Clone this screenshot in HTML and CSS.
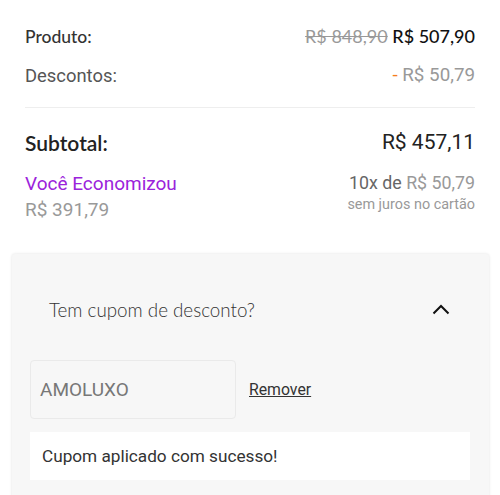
FILE: index.html
```html
<!DOCTYPE html>
<html lang="pt-BR">
<head>
  <meta charset="UTF-8">
  <meta name="viewport" content="width=device-width, initial-scale=1.0">
  <title>Resumo do pedido</title>
  <link rel="stylesheet" href="styles.css">
</head>
<body>
  <div id="resumo">
    <div class="linha">
      <span class="rotulo forte">Produto:</span>
      <span class="valor"><s class="antigo">R$ 848,90</s> <span class="atual">R$ 507,90</span></span>
    </div>
    <div class="linha">
      <span class="rotulo">Descontos:</span>
      <span class="desconto"><span class="traco">-</span> R$ 50,79</span>
    </div>
    <hr class="divisor">
    <div class="linha total">
      <span class="rotulo-total">Subtotal:</span>
      <span class="valor-total">R$ 457,11</span>
    </div>
    <div class="economia">
      <div>
        <p class="economizou">Você Economizou</p>
        <p class="economia-valor">R$ 391,79</p>
      </div>
      <div class="parcelas">
        <p class="parcela">10x de <span class="cinza">R$ 50,79</span></p>
        <p class="juros">sem juros no cartão</p>
      </div>
    </div>
  </div>

  <div id="cupom">
    <div class="cupom-topo">
      <span class="cupom-titulo">Tem cupom de desconto?</span>
      <svg class="seta" width="18" height="11" viewBox="0 0 18 11">
        <path d="M1.5 9.5 L9 2 L16.5 9.5" fill="none" stroke="#111" stroke-width="2"/>
      </svg>
    </div>
    <div class="cupom-form">
      <div class="campo">AMOLUXO</div>
      <a href="#" class="remover">Remover</a>
    </div>
    <div class="mensagem">Cupom aplicado com sucesso!</div>
  </div>
</body>
</html>
```

FILE: styles.css
```css
html, body, p {
  margin: 0;
  padding: 0;
}

body {
  background-color: #fff;
  color: #444;
  font-family: Roboto, "Liberation Sans", sans-serif;
  font-size: 16px;
}

#resumo {
  padding: 24px 25px 0;
}

.linha {
  display: flex;
  justify-content: space-between;
  align-items: center;
  height: 24px;
  margin-bottom: 15px;
}

.rotulo {
  font-size: 18.4px;
  color: #555;
}

.forte {
  font-family: Lato, "Open Sans", sans-serif;
  font-weight: 500;
  font-size: 17.5px;
  color: #333;
}

.valor {
  font-family: Lato, "Open Sans", sans-serif;
  font-size: 18px;
}

.antigo {
  color: #999;
}

.atual {
  color: #111;
  font-weight: 500;
}

.desconto {
  font-size: 18.8px;
  color: #999;
}

.traco {
  color: #f57c1f;
}

.divisor {
  border: 0;
  border-top: 1px solid #eee;
  margin: 20px 0 19px;
}

.total {
  height: 30px;
  margin-bottom: 14px;
}

.rotulo-total {
  font-family: Lato, "Open Sans", sans-serif;
  font-weight: 600;
  font-size: 21px;
  color: #222;
}

.valor-total {
  font-size: 21px;
  color: #222;
}

.economia {
  display: flex;
  justify-content: space-between;
}

.economizou {
  font-size: 19px;
  color: #9b23db;
  line-height: 26px;
}

.economia-valor {
  font-size: 19px;
  color: #999;
  line-height: 26px;
}

.parcelas {
  text-align: right;
}

.parcela {
  font-size: 17.8px;
  color: #666;
  line-height: 24px;
}

.cinza {
  color: #999;
}

.juros {
  font-size: 14.4px;
  color: #999;
  line-height: 20px;
}

#cupom {
  margin: 31px 11px 0 12px;
  padding: 0 19px 20px 18px;
  background-color: #f7f7f7;
  border-radius: 3px;
  box-shadow: 0 0 3px rgba(0, 0, 0, 0.12);
}

.cupom-topo {
  display: flex;
  justify-content: space-between;
  align-items: center;
  height: 101px;
  padding: 5px 20px 0 19px;
}

.cupom-titulo {
  font-family: Lato, "Open Sans", sans-serif;
  font-weight: 300;
  font-size: 18.8px;
  color: #333;
}

.cupom-form {
  display: flex;
  align-items: center;
  gap: 13px;
}

.campo {
  width: 195px;
  height: 57px;
  line-height: 57px;
  padding-left: 9px;
  font-size: 19px;
  color: #777;
  background-color: #f7f7f7;
  border: 1px solid #eaeaea;
  border-radius: 4px;
}

.remover {
  font-size: 15.8px;
  color: #333;
}

.mensagem {
  margin-top: 13px;
  padding: 0 12px;
  height: 48px;
  line-height: 48px;
  background-color: #fff;
  font-size: 17.2px;
  color: #333;
}
```
